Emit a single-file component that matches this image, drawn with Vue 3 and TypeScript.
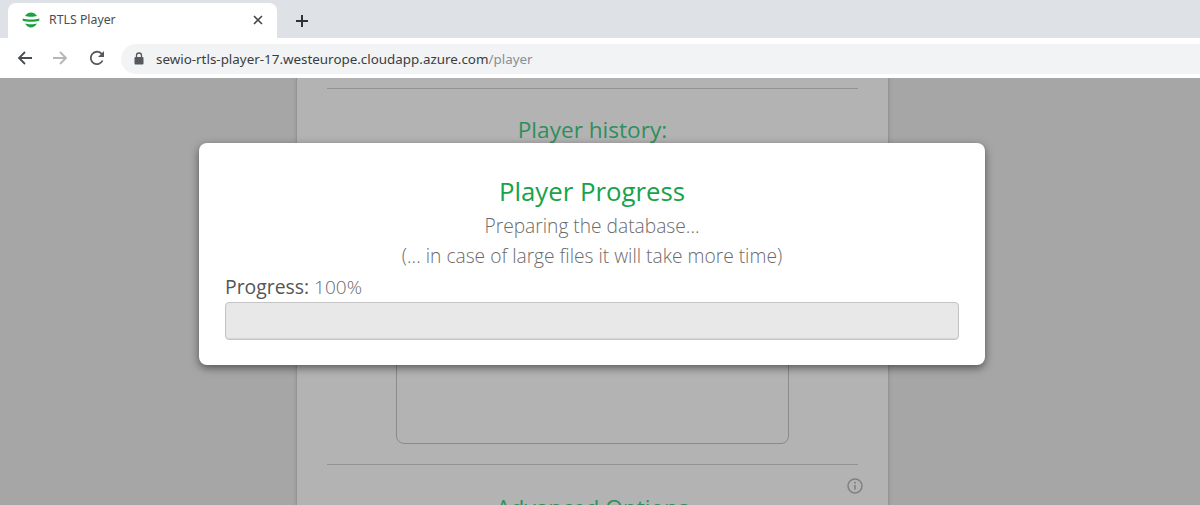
<script setup lang="ts">
const host = 'sewio-rtls-player-17.westeurope.cloudapp.azure.com'
const path = '/player'
const progress = 100
</script>

<template>
  <div class="screen">
    <header class="chrome">
      <div class="tabstrip">
        <div class="tab">
          <svg class="favicon" width="18" height="16" viewBox="0 0 18 16">
            <path d="M3 4C5 1.400 6.800.6 9 .6s4 .8 6 3.400C12 5 6 5 3 4z" fill="#1aa23f" />
            <path d="M.8 6.400c4 1.300 12.400 1.300 16.400 0 .2.800.2 1.500 0 2.300-4 1.300-12.400 1.300-16.400 0-.2-.8-.2-1.500 0-2.300z" fill="#1aa23f" />
            <path d="M3 11.400c3 1 9 1 12 0-1.600 2.700-3.800 4-6 4s-4.400-1.300-6-4z" fill="#1aa23f" />
          </svg>
          <span class="tab-title">RTLS Player</span>
          <svg class="tab-close" width="10" height="10" viewBox="0 0 10 10">
            <path d="M1 1l8 8M9 1l-8 8" stroke="#45484c" stroke-width="1.600" fill="none" />
          </svg>
        </div>
        <svg class="new-tab" width="14" height="14" viewBox="0 0 14 14">
          <path d="M7 1v12M1 7h12" stroke="#2f3236" stroke-width="2" fill="none" />
        </svg>
      </div>
      <div class="toolbar">
        <svg class="nav" width="18" height="18" viewBox="0 0 18 18">
          <path d="M16 9H3M9 3L3 9l6 6" stroke="#4a4d51" stroke-width="1.800" fill="none" />
        </svg>
        <svg class="nav" width="18" height="18" viewBox="0 0 18 18">
          <path d="M2 9h13M9 3l6 6-6 6" stroke="#b4b6b9" stroke-width="1.800" fill="none" />
        </svg>
        <svg class="nav nav-reload" width="18" height="18" viewBox="0 0 18 18">
          <path d="M14.600 11.500A6.200 6.200 0 1 1 13.500 4.700L15.500 6.700" stroke="#55585c" stroke-width="1.800" fill="none" />
          <path d="M16 2v6h-6z" fill="#55585c" />
        </svg>
        <div class="omnibox">
          <svg width="10" height="13" viewBox="0 0 10 13">
            <path d="M2.500 5V3.500a2.500 2.500 0 0 1 5 0V5" stroke="#55585c" stroke-width="1.300" fill="none" />
            <rect x="0.500" y="5" width="9" height="7.500" rx="1" fill="#55585c" />
          </svg>
          <span class="url">{{ host }}<span class="url-path">{{ path }}</span></span>
        </div>
      </div>
    </header>

    <main class="page">
      <section class="panel">
        <hr class="rule" />
        <h2 class="panel-title">Player history:</h2>
        <div class="history-box"></div>
        <hr class="rule rule-lower" />
        <div class="info-row">
          <svg width="16" height="16" viewBox="0 0 16 16">
            <circle cx="8" cy="8" r="7" stroke="#808080" stroke-width="1.500" fill="none" />
            <path d="M8 7v4.500" stroke="#808080" stroke-width="1.600" />
            <circle cx="8" cy="4.800" r="1" fill="#808080" />
          </svg>
        </div>
        <h2 class="panel-title advanced">Advanced Options</h2>
      </section>

      <div class="modal">
        <h1 class="modal-title">Player Progress</h1>
        <p class="modal-line">Preparing the database...</p>
        <p class="modal-line">(... in case of large files it will take more time)</p>
        <div class="progress-label"><strong>Progress:</strong> {{ progress }}%</div>
        <div class="progress-track"></div>
      </div>
    </main>
  </div>
</template>

<style>
html, body { margin: 0; overflow: hidden; }
</style>

<style scoped>
.screen {
  width: 1200px;
  height: 505px;
  display: flex;
  flex-direction: column;
  overflow: hidden;
  font-family: "Open Sans", "Noto Sans", sans-serif;
}
.chrome { flex: none; }
.tabstrip {
  height: 38px;
  background: #dee1e6;
  display: flex;
  align-items: flex-end;
  padding-left: 8px;
  box-sizing: border-box;
}
.tab {
  width: 269px;
  height: 35px;
  background: #fff;
  border-radius: 8px 8px 0 0;
  display: flex;
  align-items: center;
  padding: 0 14px 2px 14px;
  box-sizing: border-box;
}
.favicon { flex: none; margin-right: 9px; }
.tab-title {
  font-family: "Noto Sans", sans-serif;
  font-size: 12.300px;
  color: #4a4d51;
  flex: 1;
}
.new-tab { margin: 0 0 10px 18px; }
.toolbar {
  height: 40px;
  background: #fff;
  display: flex;
  align-items: center;
  padding-left: 16px;
  box-sizing: border-box;
  gap: 17px;
}
.nav { flex: none; }
.nav-reload { margin-left: 2px; margin-right: -2px; }
.omnibox {
  width: 1079px;
  height: 30px;
  margin-top: 1px;
  background: #f1f3f4;
  border-radius: 15px 0 0 15px;
  display: flex;
  align-items: center;
  gap: 12px;
  padding-left: 13px;
  box-sizing: border-box;
}
.url {
  font-family: "Noto Sans", sans-serif;
  font-size: 13.400px;
  color: #3a3d41;
}
.url-path { color: #8b8e92; }

.page {
  position: relative;
  flex: 1;
  min-height: 0;
  background: #a6a6a6;
  display: flex;
  justify-content: center;
  overflow: hidden;
  padding-right: 15px;
}
.panel {
  width: 593px;
  height: 470px;
  flex: none;
  box-sizing: border-box;
  background: #b3b3b3;
  padding: 10px 30px 0;
  border-left: 1px solid #949494;
  border-right: 1px solid #949494;
  box-shadow: 0 0 4px rgba(0, 0, 0, .12);
}
.rule {
  margin: 0;
  border: 0;
  border-top: 1px solid #939393;
}
.panel-title {
  margin: 26px 0 0;
  text-align: center;
  font-weight: 400;
  font-size: 22.600px;
  line-height: 30px;
  color: #2f8f5b;
}
.history-box {
  width: 393px;
  height: 299px;
  margin: 0 auto;
  box-sizing: border-box;
  border: 1px solid #8a8a8a;
  border-radius: 8px;
}
.rule-lower { margin-top: 20px; }
.info-row {
  display: flex;
  justify-content: flex-end;
  margin-top: 13px;
  margin-right: -5px;
}
.info-row svg { display: block; }
.advanced { margin-top: -1px; }

.modal {
  position: absolute;
  left: 199px;
  top: 65px;
  width: 786px;
  height: 222px;
  box-sizing: border-box;
  background: #fff;
  border-radius: 8px;
  box-shadow: 0 3px 9px rgba(0, 0, 0, .5);
  padding: 30px 26px 0;
  text-align: center;
}
.modal-title {
  margin: 0 0 2px;
  font-weight: 400;
  font-size: 25.800px;
  line-height: 36px;
  color: #17a34a;
}
.modal-line {
  margin: 0;
  font-weight: 300;
  font-size: 19.200px;
  line-height: 30px;
  color: #6b6b6b;
}
.progress-label {
  text-align: left;
  font-size: 19px;
  line-height: 24px;
  font-weight: 300;
  color: #6b6b6b;
  margin-top: 4px;
}
.progress-label strong { font-weight: 400; font-size: 19.400px; color: #555; }
.progress-track {
  height: 38px;
  margin-top: 3px;
  box-sizing: border-box;
  background: #e8e8e8;
  border: 1px solid #c4c4c4;
  border-radius: 4px;
  box-shadow: inset 0 -1px 1px rgba(0, 0, 0, .08);
}
</style>
